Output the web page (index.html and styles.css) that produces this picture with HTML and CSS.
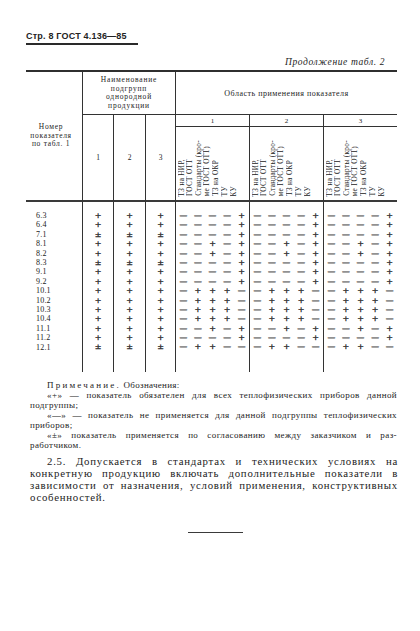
FILE: index.html
```html
<!DOCTYPE html>
<html lang="ru">
<head>
<meta charset="utf-8">
<title>ГОСТ 4.136—85, стр. 8</title>
<link rel="stylesheet" href="styles.css">
</head>
<body>
<div class="page">
  <div class="runhead">Стр. 8 ГОСТ 4.136—85</div>
  <div class="cont">Продолжение табл. 2</div>

  <div class="tbl">
    <div class="h-num">Номер<br>показателя<br>по табл. 1</div>
    <div class="h-sub">Наименование<br>подгрупп<br>однородной<br>продукции</div>
    <div class="h-area">Область применения показателя</div>

    <div class="h-subn s1">1</div>
    <div class="h-subn s2">2</div>
    <div class="h-subn s3">3</div>

    <div class="h-grpn g1">1</div>
    <div class="h-grpn g2">2</div>
    <div class="h-grpn g3">3</div>

    <div class="h-grpv g1">
      <span class="vt">ТЗ на НИР,</span><span class="vt">ГОСТ ОТТ</span>
      <span class="vt gap">Стандарты (кро-</span><span class="vt">ме ГОСТ ОТТ)</span>
      <span class="vt gap">ТЗ на ОКР</span>
      <span class="vt gap">ТУ</span>
      <span class="vt gap">КУ</span>
    </div>
    <div class="h-grpv g2">
      <span class="vt">ТЗ на НИР,</span><span class="vt">ГОСТ ОТТ</span>
      <span class="vt gap">Стандарты (кро-</span><span class="vt">ме ГОСТ ОТТ)</span>
      <span class="vt gap">ТЗ на ОКР</span>
      <span class="vt gap">ТУ</span>
      <span class="vt gap">КУ</span>
    </div>
    <div class="h-grpv g3">
      <span class="vt">ТЗ на НИР,</span><span class="vt">ГОСТ ОТТ</span>
      <span class="vt gap">Стандарты (кро-</span><span class="vt">ме ГОСТ ОТТ)</span>
      <span class="vt gap">ТЗ на ОКР</span>
      <span class="vt gap">ТУ</span>
      <span class="vt gap">КУ</span>
    </div>

    <div class="d-num">
      <div>6.3</div><div>6.4</div><div>7.1</div><div>8.1</div><div>8.2</div>
      <div>8.3</div><div>9.1</div><div>9.2</div><div>10.1</div><div>10.2</div>
      <div>10.3</div><div>10.4</div><div>11.1</div><div>11.2</div><div>12.1</div>
    </div>

    <div class="d-sub s1">
      <i>+</i><i>+</i><i>±</i><i>+</i><i>+</i><i>±</i><i>+</i><i>+</i><i>+</i><i>+</i><i>+</i><i>+</i><i>+</i><i>+</i><i>±</i>
    </div>
    <div class="d-sub s2">
      <i>+</i><i>+</i><i>±</i><i>+</i><i>+</i><i>±</i><i>+</i><i>+</i><i>+</i><i>+</i><i>+</i><i>+</i><i>+</i><i>+</i><i>±</i>
    </div>
    <div class="d-sub s3">
      <i>+</i><i>+</i><i>±</i><i>+</i><i>+</i><i>±</i><i>+</i><i>+</i><i>+</i><i>+</i><i>+</i><i>+</i><i>+</i><i>+</i><i>±</i>
    </div>

    <div class="d-grp g1">
      <i class="m">—</i><i class="m">—</i><i class="m">—</i><i class="m">—</i><i>+</i>
      <i class="m">—</i><i class="m">—</i><i class="m">—</i><i class="m">—</i><i>+</i>
      <i class="m">—</i><i class="m">—</i><i class="m">—</i><i class="m">—</i><i>+</i>
      <i class="m">—</i><i class="m">—</i><i>+</i><i class="m">—</i><i>+</i>
      <i class="m">—</i><i class="m">—</i><i>+</i><i class="m">—</i><i>+</i>
      <i class="m">—</i><i class="m">—</i><i class="m">—</i><i class="m">—</i><i>+</i>
      <i class="m">—</i><i class="m">—</i><i class="m">—</i><i class="m">—</i><i>+</i>
      <i class="m">—</i><i class="m">—</i><i class="m">—</i><i class="m">—</i><i>+</i>
      <i class="m">—</i><i>+</i><i>+</i><i>+</i><i class="m">—</i>
      <i class="m">—</i><i>+</i><i>+</i><i>+</i><i class="m">—</i>
      <i class="m">—</i><i>+</i><i>+</i><i>+</i><i class="m">—</i>
      <i class="m">—</i><i>+</i><i>+</i><i>+</i><i class="m">—</i>
      <i class="m">—</i><i class="m">—</i><i>+</i><i class="m">—</i><i>+</i>
      <i class="m">—</i><i class="m">—</i><i class="m">—</i><i class="m">—</i><i>+</i>
      <i class="m">—</i><i>+</i><i>+</i><i class="m">—</i><i class="m">—</i>
    </div>
    <div class="d-grp g2">
      <i class="m">—</i><i class="m">—</i><i class="m">—</i><i class="m">—</i><i>+</i>
      <i class="m">—</i><i class="m">—</i><i class="m">—</i><i class="m">—</i><i>+</i>
      <i class="m">—</i><i class="m">—</i><i class="m">—</i><i class="m">—</i><i>+</i>
      <i class="m">—</i><i class="m">—</i><i>+</i><i class="m">—</i><i>+</i>
      <i class="m">—</i><i class="m">—</i><i>+</i><i class="m">—</i><i>+</i>
      <i class="m">—</i><i class="m">—</i><i class="m">—</i><i class="m">—</i><i>+</i>
      <i class="m">—</i><i class="m">—</i><i class="m">—</i><i class="m">—</i><i>+</i>
      <i class="m">—</i><i class="m">—</i><i class="m">—</i><i class="m">—</i><i>+</i>
      <i class="m">—</i><i>+</i><i>+</i><i>+</i><i class="m">—</i>
      <i class="m">—</i><i>+</i><i>+</i><i>+</i><i class="m">—</i>
      <i class="m">—</i><i>+</i><i>+</i><i>+</i><i class="m">—</i>
      <i class="m">—</i><i>+</i><i>+</i><i>+</i><i class="m">—</i>
      <i class="m">—</i><i class="m">—</i><i>+</i><i class="m">—</i><i>+</i>
      <i class="m">—</i><i class="m">—</i><i class="m">—</i><i class="m">—</i><i>+</i>
      <i class="m">—</i><i>+</i><i>+</i><i class="m">—</i><i class="m">—</i>
    </div>
    <div class="d-grp g3">
      <i class="m">—</i><i class="m">—</i><i class="m">—</i><i class="m">—</i><i>+</i>
      <i class="m">—</i><i class="m">—</i><i class="m">—</i><i class="m">—</i><i>+</i>
      <i class="m">—</i><i class="m">—</i><i class="m">—</i><i class="m">—</i><i>+</i>
      <i class="m">—</i><i class="m">—</i><i>+</i><i class="m">—</i><i>+</i>
      <i class="m">—</i><i class="m">—</i><i>+</i><i class="m">—</i><i>+</i>
      <i class="m">—</i><i class="m">—</i><i class="m">—</i><i class="m">—</i><i>+</i>
      <i class="m">—</i><i class="m">—</i><i class="m">—</i><i class="m">—</i><i>+</i>
      <i class="m">—</i><i class="m">—</i><i class="m">—</i><i class="m">—</i><i>+</i>
      <i class="m">—</i><i>+</i><i>+</i><i>+</i><i class="m">—</i>
      <i class="m">—</i><i>+</i><i>+</i><i>+</i><i class="m">—</i>
      <i class="m">—</i><i>+</i><i>+</i><i>+</i><i class="m">—</i>
      <i class="m">—</i><i>+</i><i>+</i><i>+</i><i class="m">—</i>
      <i class="m">—</i><i class="m">—</i><i>+</i><i class="m">—</i><i>+</i>
      <i class="m">—</i><i class="m">—</i><i class="m">—</i><i class="m">—</i><i>+</i>
      <i class="m">—</i><i>+</i><i>+</i><i class="m">—</i><i class="m">—</i>
    </div>
  </div>

  <div class="notes">
    <div class="ind"><span class="spaced">Примечание.</span> <span class="obz">Обозначения:</span></div>
    <div class="ind jl">«+» — показатель обязателен для всех теплофизических приборов данной</div>
    <div>подгруппы;</div>
    <div class="ind jl">«—» — показатель не применяется для данной подгруппы теплофизических</div>
    <div>приборов;</div>
    <div class="ind jl">«±» показатель применяется по согласованию между заказчиком и раз-</div>
    <div>работчиком.</div>
  </div>

  <div class="para">
    <div class="ind jl">2.5. Допускается в стандартах и технических условиях на</div>
    <div class="jl">конкретную продукцию включать дополнительные показатели в</div>
    <div class="jl">зависимости от назначения, условий применения, конструктивных</div>
    <div>особенностей.</div>
  </div>

  <div class="endrule"></div>
</div>
</body>
</html>
```

FILE: styles.css
```css
html, body {
  margin: 0;
  background: #fff;
}
body {
  color: #232323;
  font-family: "Liberation Serif", "DejaVu Serif", serif;
}
.page {
  width: 371px;
  padding: 31px 0 0 26px;
}

/* running head */
.runhead {
  display: block;
  width: 112px;
  padding-bottom: 1px;
  border-bottom: 2px solid #2a2a2a;
  font: bold 9px/11px "Liberation Sans", Arial, sans-serif;
  letter-spacing: 0.2px;
}
.cont {
  margin-top: 12px;
  padding-right: 12px;
  text-align: right;
  font-style: italic;
  font-size: 9.5px;
  line-height: 11px;
  letter-spacing: 0.6px;
}

/* table */
.tbl {
  margin-top: 2px;
  border-top: 2px solid #2f2f2f;
  display: grid;
  grid-template-columns: 56px 31px 32px 30px repeat(15, 1fr);
  grid-template-rows: 43px 12px 75px 170px;
  font-size: 8px;
}
.h-num {
  grid-column: 1;
  grid-row: 1 / 4;
  display: flex;
  align-items: center;
  justify-content: center;
  padding-right: 6px;
  text-align: center;
  font-size: 7.5px;
  line-height: 8.4px;
  letter-spacing: 0.7px;
  border-bottom: 2px solid #3a3a3a;
}
.h-sub {
  grid-column: 2 / 5;
  grid-row: 1;
  display: flex;
  align-items: center;
  justify-content: center;
  text-align: center;
  font-size: 7.5px;
  line-height: 8.5px;
  letter-spacing: 0.8px;
  border-left: 1px solid #333;
  border-bottom: 1px solid #333;
}
.h-area {
  grid-column: 5 / 20;
  grid-row: 1;
  display: flex;
  align-items: center;
  justify-content: center;
  letter-spacing: 0.5px;
  border-left: 1px solid #333;
  border-bottom: 1px solid #333;
}
.h-subn {
  grid-row: 2 / 4;
  display: flex;
  align-items: center;
  justify-content: center;
  font-size: 7.5px;
  border-left: 1px solid #333;
  border-bottom: 2px solid #3a3a3a;
}
.s1 { grid-column: 2; }
.s2 { grid-column: 3; }
.s3 { grid-column: 4; }
.g1 { grid-column: 5 / 10; }
.g2 { grid-column: 10 / 15; }
.g3 { grid-column: 15 / 20; }

.h-grpn {
  grid-row: 2;
  display: flex;
  align-items: center;
  justify-content: center;
  font-size: 7px;
  line-height: 8px;
  border-left: 1px solid #333;
  border-bottom: 1px solid #333;
}
.h-grpv {
  grid-row: 3;
  display: flex;
  align-items: flex-end;
  padding: 0 0 4px 2px;
  border-left: 1px solid #333;
  border-bottom: 2px solid #3a3a3a;
}
.vt {
  writing-mode: vertical-rl;
  transform: rotate(180deg);
  white-space: nowrap;
  font-size: 7.2px;
  line-height: 8px;
  letter-spacing: 0.35px;
}
.vt.gap { margin-left: 1px; }

.d-num {
  grid-column: 1;
  grid-row: 4;
  padding: 9px 0 0 10px;
  font-size: 8px;
  line-height: 9.4px;
  letter-spacing: 0.2px;
}
.d-sub {
  grid-row: 4;
  display: grid;
  grid-auto-rows: 9.4px;
  justify-items: center;
  align-items: center;
  align-content: start;
  padding-top: 9px;
  border-left: 1px solid #333;
}
.d-grp {
  grid-row: 4;
  display: grid;
  grid-template-columns: repeat(5, 1fr);
  grid-auto-rows: 9.4px;
  justify-items: center;
  align-items: center;
  align-content: start;
  padding-top: 9px;
  border-left: 1px solid #333;
}
.d-sub i, .d-grp i {
  font-family: "DejaVu Serif", serif;
  font-style: normal;
  font-size: 8px;
  line-height: 9.4px;
  color: #1c1c1c;
  -webkit-text-stroke: 0.3px #1c1c1c;
}
.d-grp i.m {
  font-size: 7.8px;
}

/* notes */
.notes {
  margin-top: 8px;
  padding-left: 4px;
  width: 367px;
  font-size: 9px;
  line-height: 10px;
  letter-spacing: 0.4px;
}
.ind { padding-left: 17px; }
.jl {
  text-align: justify;
  text-align-last: justify;
}
.spaced { letter-spacing: 2.2px; }
.obz { font-size: 9px; letter-spacing: 0.3px; }

.para {
  margin-top: 5px;
  padding-left: 4px;
  width: 368px;
  font-size: 10.8px;
  line-height: 12px;
  letter-spacing: 0.75px;
}

.endrule {
  width: 55px;
  margin: 29px 0 0 162px;
  border-top: 1.5px solid #3a3a3a;
}
```
